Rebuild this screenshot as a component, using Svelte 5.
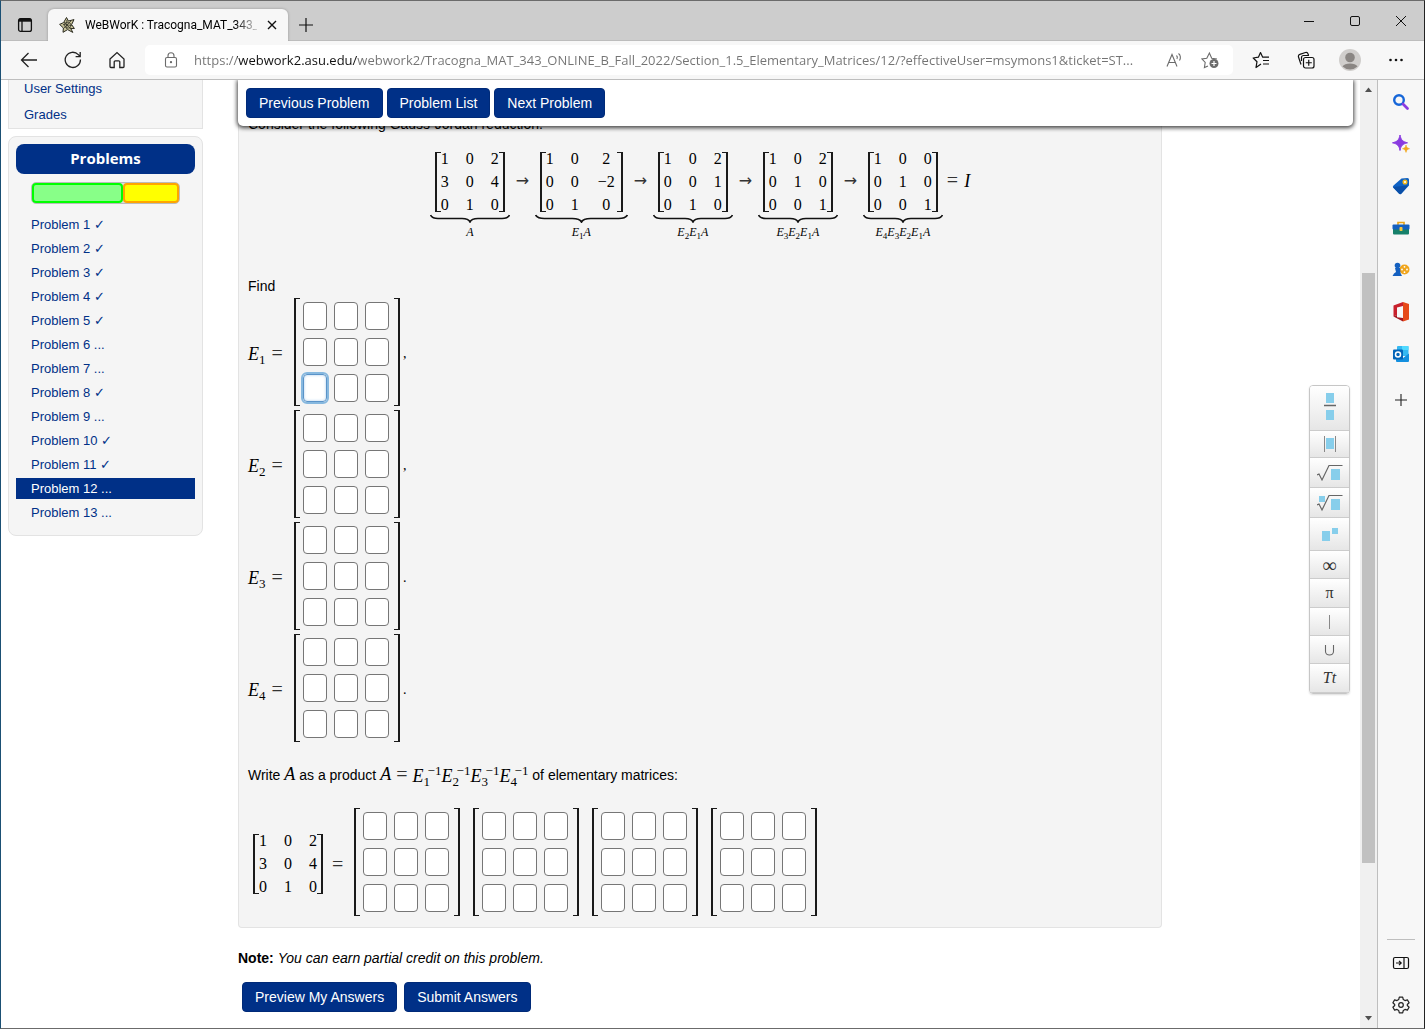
<script>
  const problems = [
    [1, '✓'], [2, '✓'], [3, '✓'], [4, '✓'], [5, '✓'], [6, '...'], [7, '...'],
    [8, '✓'], [9, '...'], [10, '✓'], [11, '✓'], [12, '...'], [13, '...'],
  ];
  const A = ['1', '0', '2', '3', '0', '4', '0', '1', '0'];
  const steps = [
    { cells: A, label: [] },
    { cells: ['1', '0', '2', '0', '0', '−2', '0', '1', '0'], label: [1], wide: true },
    { cells: ['1', '0', '2', '0', '0', '1', '0', '1', '0'], label: [2, 1] },
    { cells: ['1', '0', '2', '0', '1', '0', '0', '0', '1'], label: [3, 2, 1] },
    { cells: ['1', '0', '0', '0', '1', '0', '0', '0', '1'], label: [4, 3, 2, 1] },
  ];
  const unknowns = [[1, ','], [2, ','], [3, '.'], [4, '.']];
  const nine = [0, 1, 2, 3, 4, 5, 6, 7, 8];
  const url =
    'https://webwork2.asu.edu/webwork2/Tracogna_MAT_343_ONLINE_B_Fall_2022/Section_1.5_Elementary_Matrices/12/?effectiveUser=msymons1&ticket=ST...';
</script>

{#snippet matrix(cells, wide)}
  <div class="matrix" class:wide>
    <div class="cells">
      {#each cells as c}<span>{c}</span>{/each}
    </div>
  </div>
{/snippet}

{#snippet entry(name)}
  <div class="matrix big">
    <div class="inputs">
      {#each nine as i}
        <input
          type="text"
          class:active={name === 'E1' && i === 6}
          aria-label={`${name} row ${Math.floor(i / 3) + 1} column ${(i % 3) + 1}`}
        />
      {/each}
    </div>
  </div>
{/snippet}

<div class="window">
  <header class="tabs">
    <button class="ico tabmenu" aria-label="Tab actions">
      <svg width="16" height="16" viewBox="0 0 16 16" fill="none" stroke="#111" stroke-width="1.3">
        <rect x="1.6" y="1.6" width="12.8" height="12.8" rx="2" />
        <path d="M2 3.2h12" stroke-width="3" /><path d="M5 4v10" />
      </svg>
    </button>
    <div class="tab">
      <svg width="16" height="16" viewBox="0 0 16 16" fill="#c9c49a" stroke="#2b2b20" stroke-width="1">
        <path d="M7.5.5 9.4 4 15 2.6 12.6 7.6 15.4 11.5 11.8 11.6 13.8 15.4 8.6 12.6 4 15.3 4.4 11 .6 7.4 4.6 5.6Z" />
        <path d="M7.8 3v9M4 7.5l9 1M5 5l7 7M12 4l-7 7M6 6l3-1 3 2-1 4-4 0-2-3Z" fill="none" stroke-width=".7" />
      </svg>
      <span class="title">WeBWorK : Tracogna_MAT_343_C</span>
      <button class="ico" aria-label="Close tab">
        <svg width="10" height="10" viewBox="0 0 10 10" stroke="#111" stroke-width="1.4"><path d="M1 1l8 8M9 1l-8 8" /></svg>
      </button>
    </div>
    <button class="ico newtab" aria-label="New tab">
      <svg width="16" height="16" viewBox="0 0 16 16" stroke="#111" stroke-width="1.2"><path d="M8 1v14M1 8h14" /></svg>
    </button>
    <div class="winctl">
      <button class="ico" aria-label="Minimize"><svg width="12" height="12" viewBox="0 0 12 12" stroke="#111"><path d="M1 6.5h10" /></svg></button>
      <button class="ico" aria-label="Maximize"><svg width="12" height="12" viewBox="0 0 12 12" stroke="#111" fill="none"><rect x="1.5" y="1.5" width="9" height="9" rx="1.5" /></svg></button>
      <button class="ico" aria-label="Close"><svg width="12" height="12" viewBox="0 0 12 12" stroke="#111"><path d="M1 1l10 10M11 1L1 11" /></svg></button>
    </div>
  </header>

  <div class="toolbar">
    <button class="ico nav" aria-label="Back">
      <svg width="18" height="18" viewBox="0 0 18 18" fill="none" stroke="#222" stroke-width="1.3"><path d="M17 9H1.5M8.5 2 1.5 9l7 7" /></svg>
    </button>
    <button class="ico nav" aria-label="Refresh">
      <svg width="18" height="18" viewBox="0 0 18 18" fill="none" stroke="#222" stroke-width="1.3"><path d="M16.4 8.6A7.6 7.6 0 1 1 14.3 3.6L16 5.4M16.2 1v4.6h-4.6" /></svg>
    </button>
    <button class="ico nav" aria-label="Home">
      <svg width="18" height="18" viewBox="0 0 18 18" fill="none" stroke="#222" stroke-width="1.3"><path d="M2 8 9 1.6 16 8v7.6a.9.9 0 0 1-.9.9h-3.3V11a1.2 1.2 0 0 0-1.2-1.2H7.4A1.2 1.2 0 0 0 6.2 11v5.5H2.9a.9.9 0 0 1-.9-.9Z" /></svg>
    </button>
    <div class="address">
      <svg width="14" height="16" viewBox="0 0 14 16" fill="none" stroke="#6b6b6b" stroke-width="1.1"><rect x="1.5" y="5.5" width="11" height="9.5" rx="1.5" /><path d="M4 5.5V3.8a3 3 0 0 1 6 0v1.7" /><circle cx="7" cy="10.2" r=".6" fill="#6b6b6b" /></svg>
      <input type="text" class="url" aria-label="Address" value={url} />
      <button class="ico" aria-label="Read aloud">
        <svg width="17" height="16" viewBox="0 0 17 16" fill="none" stroke="#6b6b6b" stroke-width="1.1"><path d="M1 14.5 6 2.5l5 12M2.8 10.5h6.4M10.5 3.5c1 1 1 2.5.4 3.5M12.5 1.5c2.2 1.5 2.4 5 1 7" /></svg>
      </button>
      <button class="ico" aria-label="Add to favorites">
        <svg width="18" height="18" viewBox="0 0 18 18" fill="none" stroke="#6b6b6b" stroke-width="1.1"><path d="M7 15 3.4 16.5l.8-5L1 8l4.8-.8L8.4 2l2.3 5.2L16 8" /><circle cx="13" cy="12.5" r="4.5" fill="#6b6b6b" stroke="none" /><path d="M13 10v5M10.5 12.5h5" stroke="#fff" stroke-width="1.2" /></svg>
      </button>
    </div>
    <div class="actions">
      <button class="ico" aria-label="Favorites">
        <svg width="18" height="18" viewBox="0 0 18 18" fill="none" stroke="#111" stroke-width="1.2"><path d="M9 13 4 16.5l1-5.8L1.2 7l5.2-.8L8.5 1.5l2.2 4.7H17M11 9.5h6M11 13h6" stroke-linejoin="round" /></svg>
      </button>
      <button class="ico coll" aria-label="Collections">
        <svg width="18" height="18" viewBox="0 0 18 18" fill="none" stroke="#111" stroke-width="1.2"><rect x="6.5" y="6.5" width="10.5" height="10.5" rx="2" /><path d="M11.75 8.8v6M8.8 11.75h6M4 13.5 1.5 6a2 2 0 0 1 1.3-2.6L8.5 1.5A2 2 0 0 1 11 2.8L11.6 4.5M4.5 10V6.5a2 2 0 0 1 2-2H12" /></svg>
      </button>
      <button class="ico" aria-label="Profile">
        <svg width="22" height="22" viewBox="0 0 22 22"><circle cx="11" cy="11" r="11" fill="#d0cecc" /><circle cx="11" cy="8.5" r="4.8" fill="#8a8683" /><path d="M3.5 17.5c2-4 13-4 15 0a11 11 0 0 1-15 0Z" fill="#8a8683" /></svg>
      </button>
      <button class="ico" aria-label="More">
        <svg width="16" height="4" viewBox="0 0 16 4" fill="#111"><circle cx="2.5" cy="2" r="1.3" /><circle cx="8" cy="2" r="1.3" /><circle cx="13.5" cy="2" r="1.3" /></svg>
      </button>
    </div>
  </div>

  <div class="body">
    <div class="page">
      <nav class="side">
        <div class="panel first">
          <a href="#settings">User Settings</a>
          <a href="#grades">Grades</a>
        </div>
        <div class="panel second">
          <h2>Problems</h2>
          <div class="progress"><i class="done"></i><i class="partial"></i></div>
          <ul>
            {#each problems as [n, mark]}
              <li class:current={n === 12}><a href={`#p${n}`}>Problem {n} {mark}</a></li>
            {/each}
          </ul>
        </div>
      </nav>

      <main>
        <div class="sticky">
          <button class="btn">Previous Problem</button>
          <button class="btn">Problem List</button>
          <button class="btn">Next Problem</button>
        </div>

        <section class="problem">
          <p>Consider the following Gauss-Jordan reduction:</p>
          <div class="reduction">
            {#each steps as s, i}
              {#if i > 0}<span class="op">→</span>{/if}
              <div class="step">
                {@render matrix(s.cells, s.wide)}
                <svg class="brace" height="9" viewBox="0 0 80 9" preserveAspectRatio="none" fill="none" stroke="#111">
                  <path d="M.5 1C2 4 4 4.5 8 4.5H32C37 4.5 39 5.5 40 8 41 5.5 43 4.5 48 4.5H72C76 4.5 78 4 79.5 1" stroke-width="1.6" />
                </svg>
                <div class="under">{#each s.label as n}E<sub>{n}</sub>{/each}A</div>
              </div>
            {/each}
            <span class="tail"><span class="eq">=</span><i>I</i></span>
          </div>

          <p class="find">Find</p>
          <div class="unknowns">
            {#each unknowns as [n, end]}
              <div class="row">
                <span class="name"><i>E</i><sub>{n}</sub><span class="eq">=</span></span>
                {@render entry(`E${n}`)}
                <span class="end">{end}</span>
              </div>
            {/each}
          </div>

          <p class="write">
            Write <i class="m">A</i> as a product <i class="m">A</i><span class="eq">=</span><span class="prod">{#each [1, 2, 3, 4] as n}<span class="inv"><i>E</i><span class="scripts"><span>−1</span><span>{n}</span></span></span>{/each}</span>
            of elementary matrices:
          </p>

          <div class="product">
            <div class="known">
              {@render matrix(A, false)}
              <span class="eq">=</span>
            </div>
            <div class="factors">
              {#each [1, 2, 3, 4] as n}{@render entry(`Factor ${n}`)}{/each}
            </div>
          </div>
        </section>

        <p class="note"><b>Note:</b> <em>You can earn partial credit on this problem.</em></p>
        <div class="submit">
          <button class="btn">Preview My Answers</button>
          <button class="btn">Submit Answers</button>
        </div>
      </main>

      <div class="keys">
        <button style:height="45px" aria-label="Fraction"><svg width="12" height="30" viewBox="0 0 12 30"><path d="M2 0h8v10H2zM2 17h8v10H2z" fill="#87ceeb" /><path d="M0 12.500h12" stroke="#666" stroke-width="1.500" /></svg></button>
        <button style:height="27px" aria-label="Absolute value"><svg width="14" height="16" viewBox="0 0 14 16"><path d="M3 2h8v11H3z" fill="#87ceeb" /><path d="M1.500 0v16M12.500 0v16" stroke="#888" /></svg></button>
        <button style:height="30px" aria-label="Square root"><svg width="26" height="18" viewBox="0 0 26 18"><path d="M14 5h9v11h-9z" fill="#87ceeb" /><path d="M0 11l2-1 3 6L12 1.500H25.500" fill="none" stroke="#666" stroke-width="1.200" /></svg></button>
        <button style:height="30px" aria-label="Nth root"><svg width="26" height="18" viewBox="0 0 26 18"><path d="M14 5h9v11h-9zM2 2h6v6H2z" fill="#87ceeb" /><path d="M0 11l2-1 3 6L12 1.500H25.500" fill="none" stroke="#666" stroke-width="1.200" /></svg></button>
        <button style:height="33px" aria-label="Exponent"><svg width="16" height="14" viewBox="0 0 16 14"><path d="M0 4h8v10H0zM10 1h6v6h-6z" fill="#87ceeb" /></svg></button>
        <button style:height="28px" class="inf">∞</button>
        <button style:height="29px">π</button>
        <button style:height="28px" aria-label="Such that"><svg width="14" height="16" viewBox="0 0 14 16"><path d="M6.500 1v14" stroke="#888" /></svg></button>
        <button style:height="28px" aria-label="Union"><svg width="14" height="14" viewBox="0 0 14 14"><path d="M2.500 2v6.500a4 3.500 0 0 0 8 0V2" fill="none" stroke="#666" stroke-width="1.100" /></svg></button>
        <button style:height="29px"><i>Tt</i></button>
      </div>
    </div>

    <div class="scroll">
      <svg width="9" height="5" viewBox="0 0 9 5"><path d="M1 5 4.500.5 8 5Z" fill="#505050" /></svg>
      <div class="track"><div class="thumb"></div></div>
      <svg width="9" height="5" viewBox="0 0 9 5"><path d="M1 0 4.500 4.500 8 0Z" fill="#505050" /></svg>
    </div>

    <aside class="edge">
      <button class="ico" aria-label="Search"><svg width="18" height="18" viewBox="0 0 18 18" fill="none"><circle cx="7" cy="7" r="4.800" stroke="#1666d8" stroke-width="2.400" /><path d="M11 11l4.500 4.500" stroke="#8a3be0" stroke-width="2.800" stroke-linecap="round" /></svg></button>
      <button class="ico" aria-label="Discover"><svg width="18" height="18" viewBox="0 0 18 18"><path d="M8 0c1 5 2.500 6.500 7.500 7.800C10.500 9 9 10.500 8 15.500 7 10.500 5.500 9 .5 7.800 5.500 6.500 7 5 8 0Z" fill="#8a3be0" stroke="#8a3be0" /><path d="M14 10c.6 2.500 1 3 3.500 3.700-2.500.7-2.900 1.200-3.500 3.700-.6-2.500-1-3-3.500-3.700 2.500-.7 2.900-1.200 3.500-3.700Z" fill="#f2a81d" stroke="#f2a81d" stroke-width=".6" /></svg></button>
      <button class="ico" aria-label="Shopping"><svg width="18" height="18" viewBox="0 0 18 18"><path d="M9.500 1.500 15.500 1a1.500 1.500 0 0 1 1.500 1.500v6L9.500 16.500a1.800 1.800 0 0 1-2.600 0L1.500 11a1.800 1.800 0 0 1 0-2.600Z" fill="#0f62c4" /><path d="M1 10 16 8.500 9.500 16.500a1.800 1.800 0 0 1-2.600 0Z" fill="#0a4fa8" /><circle cx="13" cy="5" r="1.800" fill="#fff" stroke="#f2b81d" stroke-width="1.500" /></svg></button>
      <button class="ico" aria-label="Tools"><svg width="18" height="18" viewBox="0 0 18 18"><path d="M6 6V3.500h6V6" fill="none" stroke="#e8a317" stroke-width="1.600" /><rect x="1" y="9" width="16" height="6.500" rx="1" fill="#16806a" /><rect x=".5" y="5.500" width="17" height="5" rx="1" fill="#1460c0" /><rect x="7.500" y="8" width="3" height="4" rx=".8" fill="#f8c63a" /></svg></button>
      <button class="ico" aria-label="Games"><svg width="18" height="18" viewBox="0 0 18 18"><circle cx="12.500" cy="8.500" r="5" fill="#f0a51c" /><g fill="#fff"><circle cx="12.500" cy="5.800" r=".9" /><circle cx="10" cy="8.500" r=".9" /><circle cx="15" cy="8.500" r=".9" /><circle cx="12.500" cy="11.200" r=".9" /></g><circle cx="5.500" cy="4.500" r="2.800" fill="#1460c0" /><path d="M3 7h5l.5 5 1.500 3H.5L2 12.500 4 11Z" fill="#1460c0" /></svg></button>
      <button class="ico" aria-label="Office"><svg width="18" height="20" viewBox="0 0 18 20"><path d="M11 0 1.500 3.500v11L5 13V5.500L11 4Z" fill="#c8202c" /><path d="M11 0l6 2v15.500l-6 2Z" fill="#e64a19" /><path d="M1.500 14.500 11 19.500V16l-6-.8V13Z" fill="#a3161f" /></svg></button>
      <button class="ico" aria-label="Outlook"><svg width="18" height="18" viewBox="0 0 18 18"><rect x="5" y="1" width="11.500" height="10" rx="1" fill="#35b8f1" /><path d="M10 1h6.500v4H10z" fill="#50d9ff" /><path d="M4 9l7 4 6-4.500V16a1 1 0 0 1-1 1H5a1 1 0 0 1-1-1Z" fill="#1490df" /><rect x="1" y="4.500" width="10" height="10" rx="1" fill="#0364b8" /><circle cx="6" cy="9.500" r="2.500" fill="none" stroke="#fff" stroke-width="1.500" /></svg></button>
      <button class="ico add" aria-label="Customize"><svg width="14" height="14" viewBox="0 0 14 14" stroke="#222" stroke-width="1.100"><path d="M7 1v12M1 7h12" /></svg></button>
      <hr />
      <button class="ico" aria-label="Hide sidebar"><svg width="18" height="14" viewBox="0 0 18 14" fill="none" stroke="#111" stroke-width="1.200"><rect x="1.500" y="1.500" width="15" height="11" rx="1.500" /><path d="M12 1.500v11M4 7h5M7 4.800 9.200 7 7 9.200" /></svg></button>
      <button class="ico" aria-label="Settings"><svg width="18" height="18" viewBox="0 0 18 18" fill="none" stroke="#222" stroke-width="1.200" stroke-linejoin="round"><path d="M7.300 1.200h3.400l.6 2.400 1.700 1 2.400-.7 1.700 2.900L15.300 8.500v1l1.800 1.700-1.700 2.900-2.400-.7-1.700 1-.6 2.400H7.300l-.6-2.400-1.700-1-2.400.7L.9 11.200 2.700 9.500v-1L.9 6.800l1.700-2.900 2.400.7 1.700-1Z" /><circle cx="9" cy="9" r="2.300" /></svg></button>
    </aside>
  </div>
</div>

<style>
  :global(body) { margin: 0; }
  .window {
    box-sizing: border-box; height: 100vh; display: flex; flex-direction: column; overflow: hidden;
    border: 1px solid #6b6b6b; border-left-color: #1b5074; border-right-color: #222;
    background: #f7f7f7; color: #000; font: 14px/20px "Liberation Sans", Arial, sans-serif;
  }
  *, *::before, *::after { box-sizing: border-box; }
  button { font: inherit; }
  svg { flex: none; }
  p, h2, ul { margin: 0; padding: 0; }
  .ico { display: flex; align-items: center; justify-content: center; padding: 0; border: 0; background: none; }

  .tabs { display: flex; align-items: stretch; height: 40px; flex: none; background: #cdcdcd; border-bottom: 1px solid #bdbdbd; }
  .tabmenu { width: 47px; padding-top: 8px; }
  .tab {
    display: flex; align-items: center; gap: 10px; width: 240px; margin: 8px 0 -1px; padding: 0 11px;
    border-radius: 6px 6px 0 0; background: #f7f7f7; box-shadow: 0 0 3px #0004; clip-path: inset(-4px -4px 0 -4px);
    font: 12px/16px Roboto, "Open Sans", sans-serif;
  }
  .tab .title { flex: 1; min-width: 0; white-space: nowrap; mask-image: linear-gradient(90deg, #000 150px, transparent 176px); }
  .newtab { width: 36px; padding-top: 8px; }
  .winctl { display: flex; margin-left: auto; }
  .winctl .ico { width: 46px; }

  .toolbar { display: flex; align-items: center; height: 39px; flex: none; padding-left: 6px; border-bottom: 1px solid #bebebe; }
  .nav { width: 44px; height: 36px; }
  .address { display: flex; align-items: center; gap: 18px; flex: 1; height: 30px; margin-left: 6px; padding: 0 14px 0 19px; border-radius: 5px; background: #fff; }
  .url {
    flex: 1; min-width: 0; margin-left: -2px; padding: 0; border: 0; outline: 0; text-overflow: ellipsis;
    font: 13px/20px "Open Sans", "Noto Sans", sans-serif; color: #6e6e6e;
    background: linear-gradient(90deg, #737373 43px, #111 43px, #111 163px, #737373 163px);
    background-clip: text; -webkit-text-fill-color: transparent;
  }
  .actions { display: flex; align-items: center; padding: 0 5px; }
  .actions .ico { width: 46px; height: 30px; }
  .actions .coll { width: 43px; }

  .body { display: flex; flex: 1; min-height: 0; }
  .page { position: relative; display: flex; flex: 1; gap: 35px; min-width: 0; padding: 0 7px; overflow: hidden; background: #fff; }
  .side { width: 195px; flex: none; margin-top: -1px; font-size: 13px; }
  .side a { color: #003087; text-decoration: none; }
  .panel { border: 1px solid #e3e3e3; background: #f5f5f5; }
  .first { display: flex; flex-direction: column; gap: 6px; border-top: 0; padding: 0 15px 3px; }
  .second { margin-top: 7px; padding: 7px 7px 12px; border-radius: 8px; }
  h2 { height: 30px; border-radius: 8px; background: #003087; color: #fff; text-align: center; font: bold 15px/28px "Open Sans", "Noto Sans", sans-serif; }
  .progress { display: flex; margin: 8px 15px 0; height: 22px; border: 1px solid #bbb; border-radius: 5px; background: #ddd; }
  .progress i { border: 2px solid #0f0; border-radius: 4px; background: #8f8; }
  .progress .done { flex: 93; }
  .progress .partial { flex: 55; border-color: #ffa500; background: #ff0; }
  ul { display: flex; flex-direction: column; gap: 3px; margin-top: 10px; list-style: none; }
  li { padding: 0 15px; line-height: 21px; }
  .current { background: #003087; }
  .side .current a { color: #fff; }

  main { position: relative; flex: 1; min-width: 0; }
  .sticky {
    position: absolute; inset: 0 0 auto 0; z-index: 2; display: flex; gap: 4px; padding: 8px;
    background: #fff; border-radius: 0 0 5px 5px; box-shadow: 0 1px 4px 1px #000b;
  }
  .btn {
    height: 30px; padding: 0 12px; border: 1px solid #002a78; border-radius: 4px; background: #003087; color: #fff;
    white-space: nowrap;
  }
  .problem { max-width: 924px; padding: 34px 9px 11px; border: 1px solid #e3e3e3; border-top: 0; border-radius: 0 0 4px 4px; background: #f4f4f4; }
  .reduction, .matrix, .name, .m, .eq, .prod, .end { font-family: "Liberation Serif", "Times New Roman", serif; }
  .reduction { display: flex; justify-content: center; margin-top: 18px; font-size: 16px; }
  .op, .tail { height: 59px; line-height: 58px; }
  .op { width: 25px; text-align: center; font-family: "DejaVu Sans", sans-serif; color: #333; }
  .tail { padding-left: 4px; font-size: 18px; }
  .tail .eq { margin-right: 6px; }
  .step { display: flex; flex-direction: column; }
  .matrix { display: flex; margin: 0 5px; font-size: 16px; }
  .matrix::before, .matrix::after { content: ""; width: 6px; border: solid #1a1a1a; border-width: 1px 0 1px 2px; }
  .matrix::after { border-width: 1px 2px 1px 0; }
  .cells { display: grid; grid-template-columns: 8px 8px 8px; column-gap: 17px; line-height: 21px; height: 60px; align-content: center; }
  .cells span { display: flex; justify-content: center; height: 23px; }
  .wide .cells { grid-template-columns: 8px 8px 21px; }
  .brace { display: block; width: 100%; margin-top: 2px; }
  .under { text-align: center; font: italic 12px/18px "Liberation Serif", serif; }
  .under sub { font: 9px/0 "Liberation Serif", serif; vertical-align: -3px; }
  .find { margin-top: 35px; }
  .unknowns { display: flex; flex-direction: column; gap: 4px; margin-top: 2px; }
  .row { display: flex; align-items: center; }
  .name { width: 46px; padding-top: 3px; font-size: 18px; line-height: 24px; white-space: nowrap; }
  .name sub { font-size: 13px; line-height: 0; vertical-align: -4px; }
  .name .eq { margin-left: 6px; }
  .matrix.big { margin: 0; }
  .inputs { display: grid; grid-template-columns: repeat(3, 24px); gap: 8px 7px; padding: 4px 5px 4px 3px; }
  .inputs input { width: 24px; height: 28px; padding: 0 3px; border: 1px solid #767676; border-radius: 4px; background: #fff; }
  .inputs .active { border-color: #5a93c8; outline: 2px solid #86b8df; outline-offset: 0; box-shadow: inset 0 0 3px #a9cdec; }
  .end { margin-left: 3px; padding-top: 4px; }
  .write { height: 20px; margin-top: 22px; white-space: nowrap; }
  .m, .prod { font-size: 18px; line-height: 20px; }
  .eq { font-size: 20px; line-height: 20px; color: #333; }
  .write .eq { margin: 0 5px; vertical-align: -1px; }
  .inv { display: inline-flex; align-items: center; height: 20px; vertical-align: middle; }
  .scripts { display: flex; flex-direction: column; width: 18px; font-size: 13px; line-height: 11px; }
  .scripts span:first-child { text-align: right; }
  .product, .known { display: flex; align-items: center; }
  .product { margin-top: 24px; }
  .known { padding-top: 4px; }
  .product .eq { margin: 0 11px 0 4px; }
  .factors { display: flex; gap: 13px; }
  .note { margin-top: 20px; }
  .submit { display: flex; gap: 7px; margin: 14px 4px 0; }

  .keys {
    position: absolute; right: 10px; top: 305px; z-index: 3; display: flex; flex-direction: column; width: 41px;
    border: 1px solid #c6c6c6; border-radius: 4px; overflow: hidden; box-shadow: 0 1px 2px #0002;
  }
  .keys button {
    display: flex; align-items: center; justify-content: center; padding: 0; border: 0; border-bottom: 1px solid #ccc;
    background: linear-gradient(#fff, #e6e6e6); color: #333; font: 16px/20px "Liberation Serif", serif;
  }
  .keys .inf { font-size: 20px; }
  .scroll { display: flex; flex-direction: column; align-items: center; width: 17px; padding: 7px 0; background: #f0f0f0; }
  .track { flex: 1; width: 13px; padding: 181px 0 153px; }
  .thumb { height: 100%; background: #c1c1c1; }
  .edge { display: flex; flex-direction: column; align-items: center; width: 47px; padding: 1px 0 2px; border-left: 1px solid #bebebe; background: #f7f7f7; }
  .edge .ico { width: 46px; height: 42px; }
  .edge .add { height: 50px; }
  hr { width: 28px; margin: auto 0 2px; border: 0; border-top: 1px solid #bebebe; }
</style>
